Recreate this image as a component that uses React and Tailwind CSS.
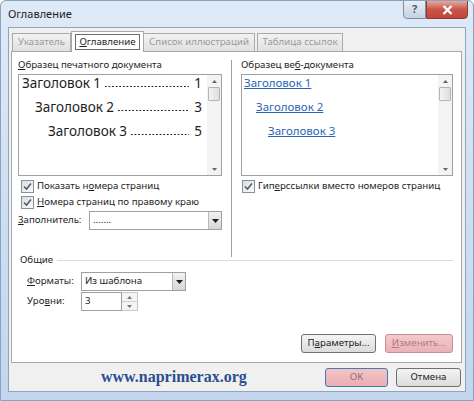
import React from 'react';

const ui = { fontFamily: '"Noto Sans", "Open Sans", sans-serif' };

const Checkbox = ({ label }) => (
  <label className="flex items-center h-4 gap-[3px] text-[9.7px] text-[#1e1e1e] whitespace-nowrap">
    <span className="shrink-0 w-[13px] h-[13px] border border-[#8e8f8f] bg-gradient-to-br from-[#dcdcdc] to-[#fbfbfb] flex items-center justify-center">
      <svg width="9" height="9" viewBox="0 0 9 9">
        <path d="M1 4.5 L3.5 7 L8 1.5" fill="none" stroke="#4a5f7a" strokeWidth="1.6" />
      </svg>
    </span>
    <span>{label}</span>
  </label>
);

const ArrowBtn = () => (
  <span className="shrink-0 w-[13px] h-full border-l border-[#b8b8b8] bg-gradient-to-b from-[#f2f2f2] to-[#d6d6d6] flex items-center justify-center">
    <svg width="7" height="4" viewBox="0 0 7 4"><path d="M0 0 H7 L3.5 4 Z" fill="#1e1e1e" /></svg>
  </span>
);

const Scrollbar = () => (
  <div className="shrink-0 w-[14px] h-full bg-[#f3f3f3] flex flex-col items-center">
    <div className="h-[12px] flex items-center">
      <svg width="5" height="3" viewBox="0 0 5 3"><path d="M0 3 L2.5 0 L5 3 Z" fill="#666" /></svg>
    </div>
    <div className="w-[12px] h-[14px] border border-[#b5b5b5] bg-gradient-to-r from-[#f4f4f4] to-[#dedede] rounded-[1px]" />
    <div className="flex-1" />
    <div className="h-[12px] flex items-center">
      <svg width="5" height="3" viewBox="0 0 5 3"><path d="M0 0 L5 0 L2.5 3 Z" fill="#666" /></svg>
    </div>
  </div>
);

// dotted leader drawn as a repeating dot background
const TocLine = ({ text, page, indent }) => (
  <div className={`flex items-end h-[14px] mb-[10px] text-[13.5px] leading-[14px] text-[#1e1e1e] ${indent}`}>
    <span className="shrink-0 whitespace-nowrap">{text}</span>
    <span className="flex-1 min-w-0 h-[3px] mb-[2px] ml-[3px] bg-[radial-gradient(circle,#222_0.75px,transparent_1.1px)] bg-[length:3.6px_3px] bg-repeat-x" />
    <span className="shrink-0 pl-[5px]">{page}</span>
  </div>
);

const Btn = ({ children, className }) => (
  <button className={`shrink-0 h-[19px] text-[9.7px] border rounded-[3px] flex items-center justify-center ${className}`}>
    {children}
  </button>
);

export default function App() {
  return (
    <div style={ui} className="w-[474px] h-[401px] overflow-hidden bg-gradient-to-b from-[#dfeaf7] via-[#cfdff1] to-[#c3d6ee] flex flex-col px-[7px] pb-[8px] border border-[#8aa2c2] rounded-t-[6px]">
      {/* title bar */}
      <div className="h-[26px] shrink-0 flex items-start">
        <div className="text-[11px] text-[#1e1e1e] pt-[5px] flex-1">Оглавление</div>
        <div className="flex -mt-px -mr-[2px]">
          <div className="w-[23px] h-[19px] border border-[#7d8fa6] rounded-bl-[4px] bg-gradient-to-b from-[#e9eff7] to-[#c4d2e3] flex items-center justify-center text-[11px] text-[#4d5d75] font-bold">?</div>
          <div className="w-[42px] h-[19px] border border-[#8e3a3a] rounded-br-[4px] bg-gradient-to-b from-[#e5a79d] via-[#c8554a] to-[#c34438] flex items-center justify-center">
            <svg width="11" height="10" viewBox="0 0 11 10"><path d="M1.5 1 L9.5 9 M9.5 1 L1.5 9" stroke="#fff" strokeWidth="2.4" /></svg>
          </div>
        </div>
      </div>

      {/* client area */}
      <div className="flex-1 min-h-0 bg-[#f0f0f0] border border-[#8fa4bf] flex flex-col">
        {/* tabs */}
        <div className="shrink-0 flex items-end h-[23px] pl-[3px] text-[9.7px] whitespace-nowrap">
          <div className="h-[18px] w-[59px] border border-[#a9a9a9] border-b-0 bg-gradient-to-b from-[#f2f2f2] to-[#e1e1e1] text-[#9a9a9a] flex items-center justify-center">Указатель</div>
          <div className="h-[21px] w-[73px] -mb-px z-10 pt-[2px] border border-[#a9a9a9] border-b-0 bg-white flex items-start justify-center">
            <span className="border border-[#6d6d6d] px-[3px] leading-[14px] text-[#1e1e1e]"><u>О</u>главление</span>
          </div>
          <div className="h-[18px] w-[111px] border border-[#a9a9a9] border-b-0 border-l-0 bg-gradient-to-b from-[#f2f2f2] to-[#e1e1e1] text-[#9a9a9a] flex items-center justify-center">Список иллюстраций</div>
          <div className="h-[18px] w-[86px] ml-[2px] border border-[#a9a9a9] border-b-0 bg-gradient-to-b from-[#f2f2f2] to-[#e1e1e1] text-[#9a9a9a] flex items-center justify-center">Таблица ссылок</div>
        </div>

        {/* panel */}
        <div className="shrink-0 h-[312px] ml-[2px] mr-[3px] bg-white border border-[#a9a9a9] flex flex-col pl-[6px] pr-[8px]">
          <div className="flex h-[205px] pt-[5px]">
            {/* left column */}
            <div className="w-[204px] shrink-0 flex flex-col">
              <div className="text-[9.7px] leading-[16px] text-[#1e1e1e] whitespace-nowrap"><u>О</u>бразец печатного документа</div>
              <div className="flex h-[102px] mt-[1px] border border-[#a0a0a0]">
                <div className="flex-1 min-w-0 pl-[3px] pr-[5px] pt-[1px]">
                  <TocLine text="Заголовок 1" page="1" indent="" />
                  <TocLine text="Заголовок 2" page="3" indent="pl-[13px]" />
                  <TocLine text="Заголовок 3" page="5" indent="pl-[26px]" />
                </div>
                <Scrollbar />
              </div>
              <div className="mt-[2px] pl-[3px]">
                <Checkbox label={<>Показать н<u>о</u>мера страниц</>} />
                <Checkbox label={<><u>Н</u>омера страниц по правому краю</>} />
              </div>
              <div className="flex items-center mt-[1px] h-[19px]">
                <span className="shrink-0 w-[71px] text-[9.7px] text-[#1e1e1e] whitespace-nowrap"><u>З</u>аполнитель:</span>
                <div className="flex-1 min-w-0 h-[19px] border border-[#a0a0a0] flex items-stretch">
                  <span className="flex-1 pl-[3px] text-[9.7px] leading-[15px] text-[#1e1e1e]">.......</span>
                  <ArrowBtn />
                </div>
              </div>
            </div>
            {/* separator */}
            <div className="shrink-0 w-px bg-[#a0a0a0] mx-[9px] mt-[3px]" />
            {/* right column */}
            <div className="flex-1 min-w-0 flex flex-col">
              <div className="text-[9.7px] leading-[16px] text-[#1e1e1e] whitespace-nowrap">Образец ве<u>б</u>-документа</div>
              <div className="flex h-[102px] mt-[1px] border border-[#a0a0a0]">
                <div className="flex-1 min-w-0 pl-[2px] pt-[1px] text-[11.5px] leading-[14px] text-[#2a66b8] underline decoration-[#2a66b8] whitespace-nowrap">
                  <div className="mb-[10px]">Заголовок 1</div>
                  <div className="mb-[10px] pl-[12px]">Заголовок 2</div>
                  <div className="pl-[24px]">Заголовок 3</div>
                </div>
                <Scrollbar />
              </div>
              <div className="mt-[2px] pl-[1px]">
                <Checkbox label={<>Гип<u>е</u>рссылки вместо номеров страниц</>} />
              </div>
            </div>
          </div>

          {/* general */}
          <div className="flex items-center gap-[4px] h-[10px] mt-[-2px]">
            <span className="text-[9.7px] text-[#1e1e1e] pl-[2px]">Общие</span>
            <div className="flex-1 h-px bg-[#dcdcdc]" />
          </div>
          <div className="flex items-center h-[19px] mt-[7px] pl-[9px]">
            <span className="shrink-0 w-[54px] text-[9.7px] text-[#1e1e1e]"><u>Ф</u>орматы:</span>
            <div className="w-[105px] h-[19px] border border-[#a0a0a0] flex items-stretch">
              <span className="flex-1 pl-[3px] text-[9.7px] leading-[16px] text-[#1e1e1e]">Из шаблона</span>
              <ArrowBtn />
            </div>
          </div>
          <div className="flex items-center h-[19px] mt-px pl-[9px]">
            <span className="shrink-0 w-[54px] text-[9.7px] text-[#1e1e1e]">Уро<u>в</u>ни:</span>
            <div className="w-[41px] h-[19px] border border-[#a0a0a0] text-[9.7px] leading-[16px] pl-[3px] text-[#1e1e1e]">3</div>
            <div className="w-[16px] h-[19px] flex flex-col border border-l-0 border-[#c8c8c8] bg-[#f4f4f4]">
              <div className="flex-1 flex items-center justify-center border-b border-[#d0d0d0]">
                <svg width="5" height="3" viewBox="0 0 5 3"><path d="M0 3 L2.5 0 L5 3 Z" fill="#777" /></svg>
              </div>
              <div className="flex-1 flex items-center justify-center">
                <svg width="5" height="3" viewBox="0 0 5 3"><path d="M0 0 L5 0 L2.5 3 Z" fill="#777" /></svg>
              </div>
            </div>
          </div>
          <div className="flex-1" />
          <div className="flex justify-end gap-[9px] mb-[9px]">
            <Btn className="w-[75px] border-[#707070] bg-gradient-to-b from-[#f4f4f4] to-[#dcdcdc] text-[#1e1e1e]">П<u>а</u>раметры...</Btn>
            <Btn className="w-[68px] border-[#c58f93] bg-gradient-to-b from-[#f6c9cc] to-[#eab2b6] text-[#b07c82]"><u>И</u>зменить...</Btn>
          </div>
        </div>

        {/* bottom */}
        <div className="flex-1 flex items-center pr-[4px]">
          <div className="flex-1 pl-[92px] text-[16px] font-bold text-[#2b4f8e] whitespace-nowrap" style={{ fontFamily: '"Liberation Serif", serif' }}>www.naprimerax.org</div>
          <Btn className="w-[63px] border-[#3f7cb4] bg-gradient-to-b from-[#f5c4c7] to-[#eaaeb2] text-[#8a7074] mr-[8px]">OK</Btn>
          <Btn className="w-[65px] border-[#707070] bg-gradient-to-b from-[#f4f4f4] to-[#dcdcdc] text-[#1e1e1e]">Отмена</Btn>
        </div>
      </div>
    </div>
  );
}
